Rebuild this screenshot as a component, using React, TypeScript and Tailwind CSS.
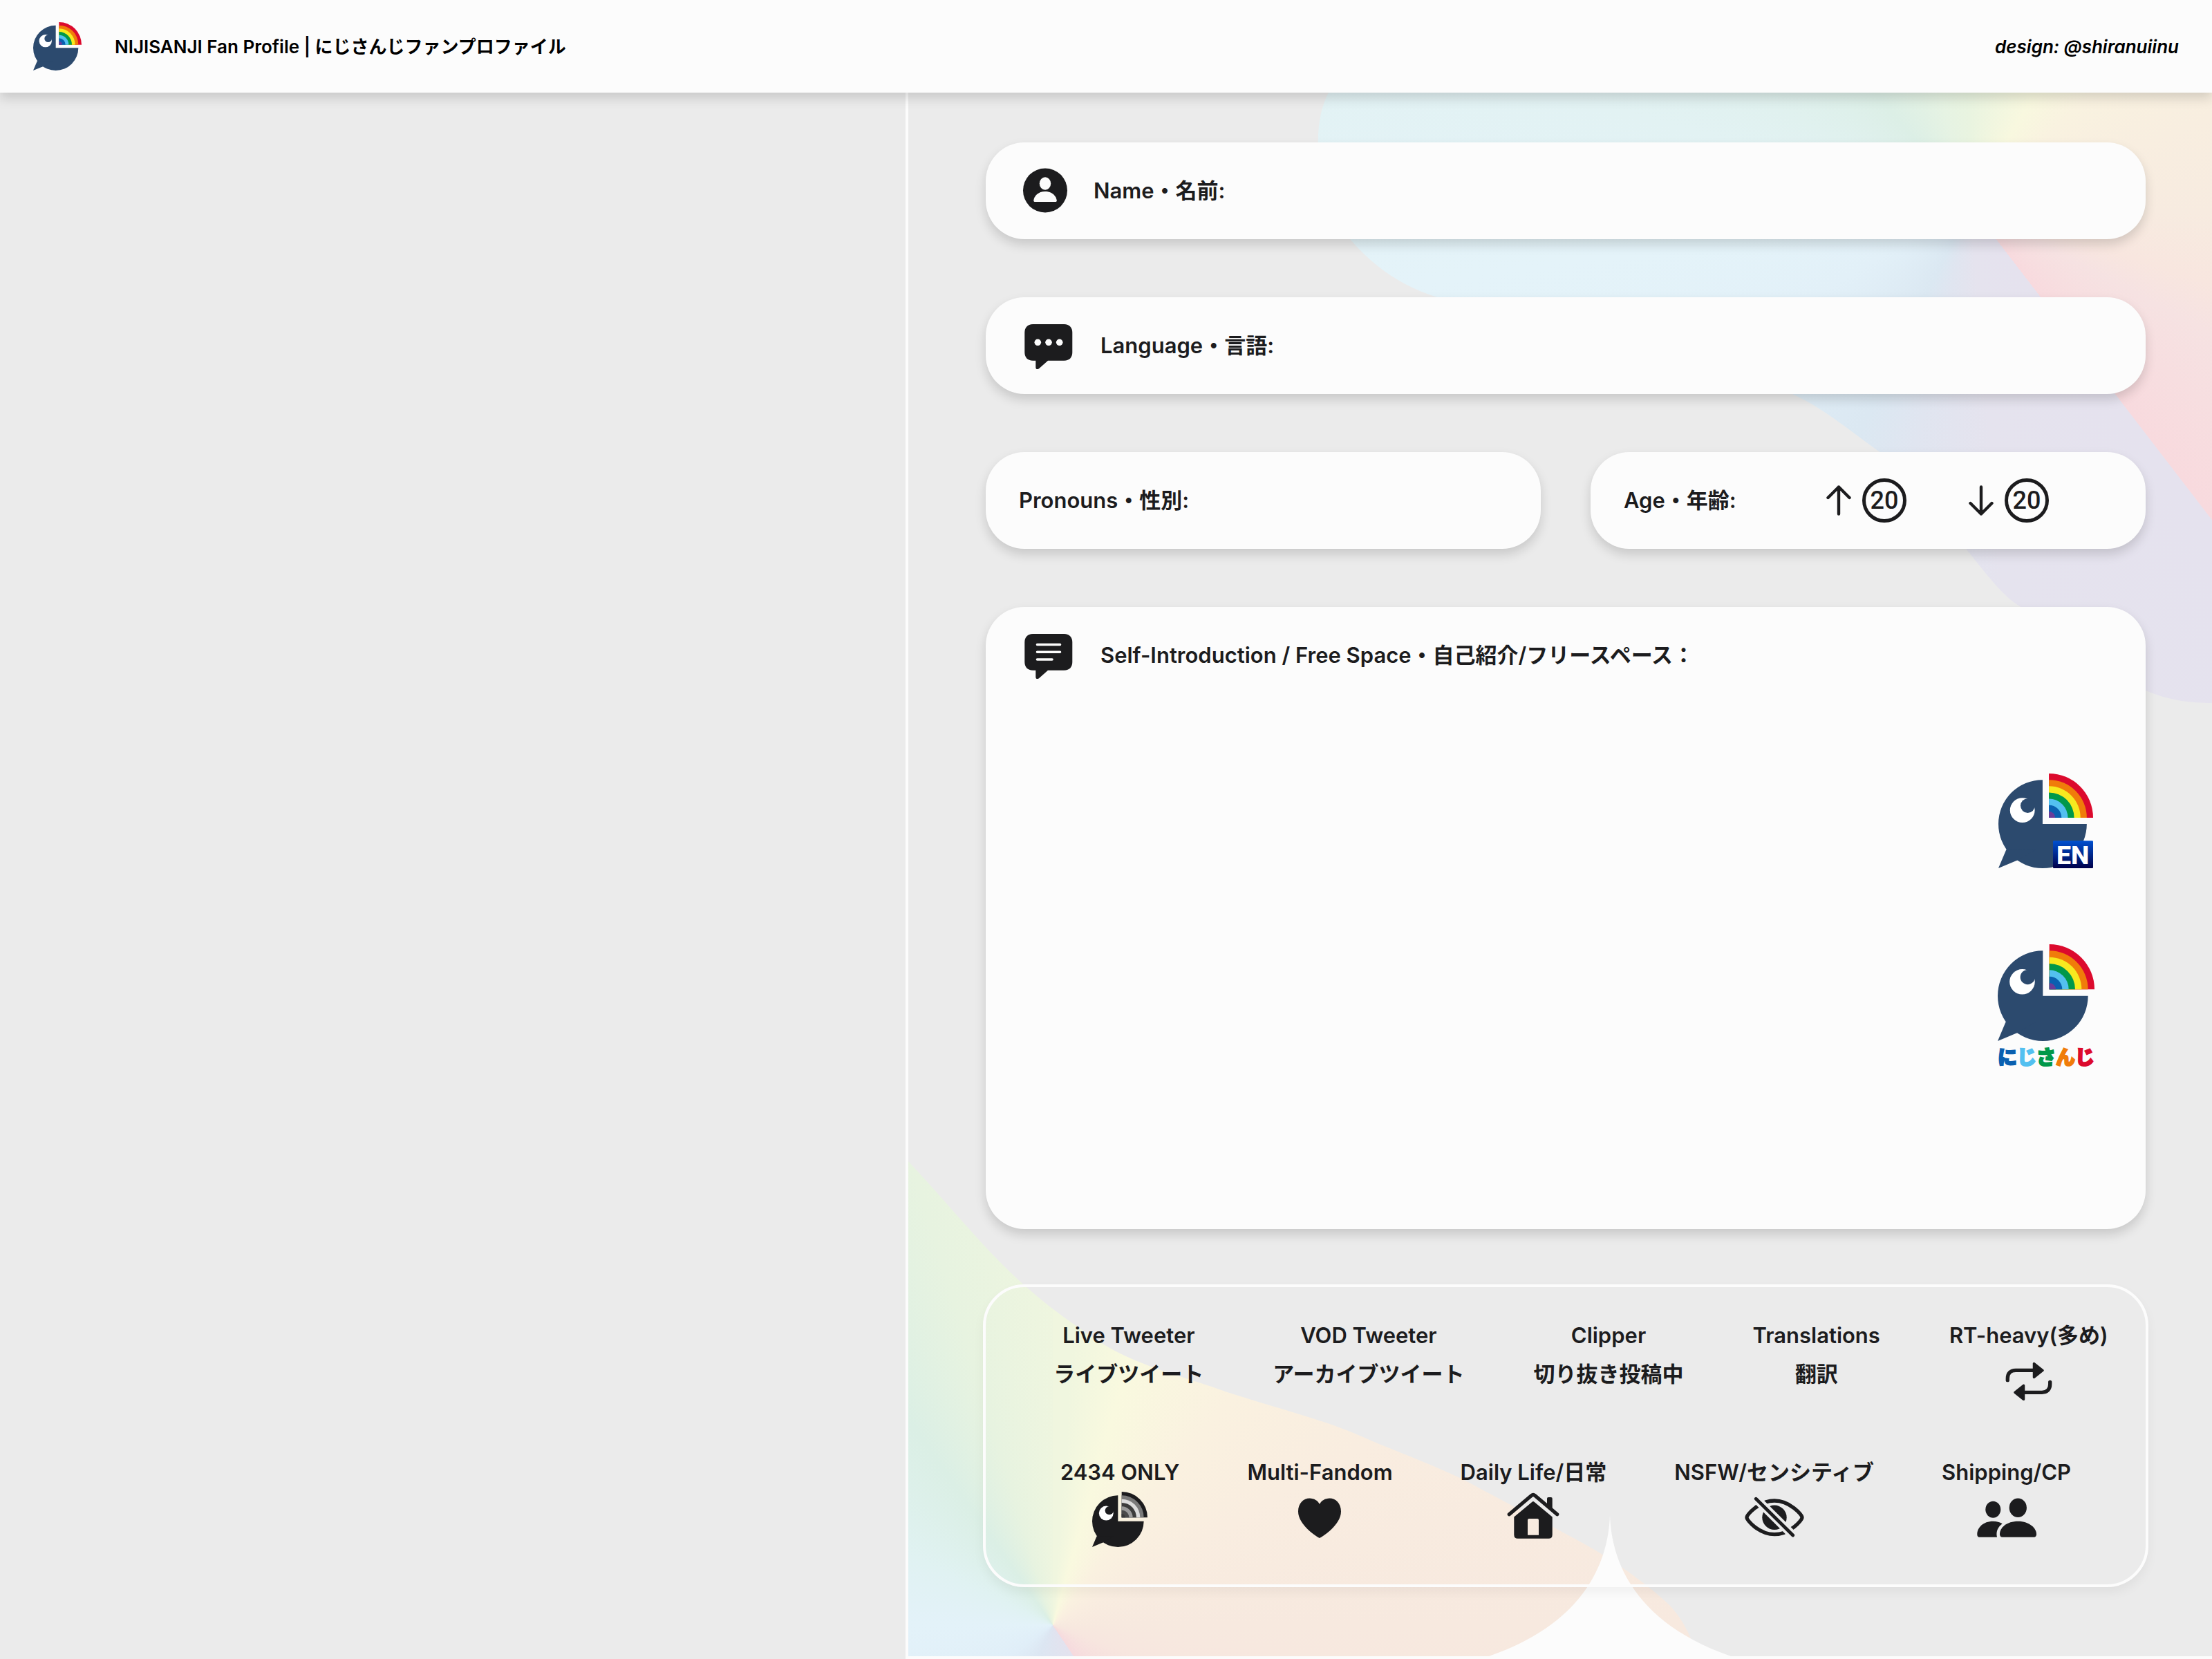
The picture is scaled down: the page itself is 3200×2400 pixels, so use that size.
import React from 'react';

// --- 1. Types & Data ---
interface OptionItem {
  title: string;
  subtitle?: string;
  icon?: React.ReactNode;
}

const FULL_COLORS = ['#dc0a2d', '#f07c0a', '#f7ea1f', '#00984a', '#53c0f0', '#0a60b0', '#6a3c9a'];
const MONO_COLORS = ['#1c1c1e', '#7a7a7a', '#dcdcdc', '#3c3c3c', '#9a9a9a', '#4a4a4a', '#3a3a3a'];

// --- 2. Logos ---
interface MascotProps {
  body?: string;
  bands?: string[];
  className?: string;
  badge?: boolean;
}

function Mascot({ body = '#2c4a6e', bands = FULL_COLORS, className, badge }: MascotProps) {
  return (
    <svg viewBox="0 0 150 150" overflow="visible" className={className} aria-hidden="true">
      <path d="M70 10A70 70 0 1 0 140 80H70Z" fill={body} />
      <path d="M12.5 120.4L0 150L30 137.5L60 120Z" fill={body} />
      <circle cx="38" cy="58.2" r="19.6" fill="#fff" />
      <circle cx="46.4" cy="51" r="11.4" fill={body} />
      {bands.map((color, i) => {
        const r = 70 - i * 10;
        return <path key={color} d={`M80 ${70 - r}A${r} ${r} 0 0 1 ${80 + r} 70H80Z`} fill={color} />;
      })}
      {badge && (
        <>
          <defs>
            <linearGradient id="badge-blue" x1="0" y1="0" x2="0" y2="1">
              <stop offset="0" stopColor="#0050d0" />
              <stop offset="1" stopColor="#00004a" />
            </linearGradient>
          </defs>
          <rect x="86.5" y="106.5" width="63.5" height="43.5" rx="1.5" fill="url(#badge-blue)" />
          <text x="118" y="143" textAnchor="middle" fontSize="41" fontWeight="800" fontFamily="Roboto, sans-serif" fill="#fff">EN</text>
        </>
      )}
    </svg>
  );
}

// --- 3. Icons ---
const AccountIcon = () => (
  <svg viewBox="0 0 76 76" className="w-19 h-19 shrink-0" fill="#1c1c1e" aria-hidden="true">
    <circle cx="38" cy="37.5" r="32" />
    <ellipse cx="38" cy="27.5" rx="8.2" ry="9.2" fill="#fcfcfc" />
    <path d="M23.5 54c-1.7 0-2.3-1-2.2-2C22 45.5 28 39 38 39S54 45.5 54.8 52c.1 1-.5 2-2.2 2Z" fill="#fcfcfc" />
  </svg>
);

function BubbleIcon({ children }: { children: React.ReactNode }) {
  return (
    <svg viewBox="0 0 86 76" className="w-[86px] h-19 shrink-0" fill="#1c1c1e" aria-hidden="true">
      <path d="M20.3 7H65.3c8 0 12 5 12 12V47.7c0 7-4 12-12 12H42L29 71.2c-2.5 1.8-4.7.8-4.7-2V59.7H20.3c-8 0-12-5-12-12V19c0-7 4-12 12-12Z" />
      {children}
    </svg>
  );
}

const DotsBubble = () => (
  <BubbleIcon>
    <g fill="#fcfcfc">
      <circle cx="27.3" cy="33.3" r="4.8" />
      <circle cx="43" cy="33.3" r="4.8" />
      <circle cx="58.7" cy="33.3" r="4.8" />
    </g>
  </BubbleIcon>
);

const LinesBubble = () => (
  <BubbleIcon>
    <path d="M26.5 22.5H59.5M26.5 33.3H59.5M26.5 44H48" fill="none" stroke="#fcfcfc" strokeWidth="3.6" strokeLinecap="round" />
  </BubbleIcon>
);

const ArrowIcon = ({ down = false }: { down?: boolean }) => (
  <svg viewBox="0 0 36 44" className={`w-9 h-11 ${down ? 'rotate-180' : ''}`} fill="none" stroke="#1c1c1e" strokeWidth="4.4" strokeLinecap="round" strokeLinejoin="round" aria-hidden="true">
    <path d="M18 41.5V2.5M2.5 18L18 2.5L33.5 18" />
  </svg>
);

const RepostIcon = () => (
  <svg viewBox="0 0 80 56" className="w-20 h-14 mt-2.5 mb-0.5" aria-hidden="true">
    <path d="M9.3 26.7V24C9.3 16.5 13.5 12.3 21 12.3H48M70.7 29.3V32.6C70.7 40 66.5 44.3 59 44.3H33" fill="none" stroke="#1c1c1e" strokeWidth="5.3" strokeLinecap="round" />
    <path d="M47.5 2.5V22.5L60 12.5ZM32.5 34.3V54.3L20 44.3Z" fill="#1c1c1e" stroke="#1c1c1e" strokeWidth="3.5" strokeLinejoin="round" />
  </svg>
);

const HeartIcon = () => (
  <svg viewBox="0 0 80 80" className="w-20 h-20" fill="#1c1c1e" aria-hidden="true">
    <path d="M40 67C36 65.5 9 48 9 28.5C9 16.5 17 9.5 25.5 9.5C32 9.5 37.5 13 40 18C42.5 13 48 9.5 54.5 9.5C63 9.5 71 16.5 71 28.5C71 48 44 65.5 40 67Z" />
  </svg>
);

const HouseIcon = () => (
  <svg viewBox="0 0 80 80" className="w-20 h-20" fill="#1c1c1e" aria-hidden="true">
    <path d="M5.3 32.8L37.5 5.5Q40 3.5 42.5 5.5L74.7 32.8" fill="none" stroke="#1c1c1e" strokeWidth="5.2" strokeLinecap="round" />
    <path d="M60 22V10q0-2 2-2h3.7q2 0 2 2V28Z" />
    <path fillRule="evenodd" d="M38.5 14.7Q40 13.5 41.5 14.7L67.7 36.5V62.2q0 5.5-5.5 5.5H17.8q-5.5 0-5.5-5.5V36.5ZM34 39q-2 0-2 2V62.7H48V41q0-2-2-2Z" />
  </svg>
);

const HiddenIcon = () => (
  <svg viewBox="0 0 96 80" className="w-24 h-20" aria-hidden="true">
    <mask id="slash-gap">
      <rect width="96" height="80" fill="#fff" />
      <path d="M16 4.7L80 68.3" stroke="#000" strokeWidth="12.5" />
    </mask>
    <g mask="url(#slash-gap)">
      <path d="M8 37.3C8 33 26 13 48 13S88 33 88 37.3S70 61.7 48 61.7S8 41.6 8 37.3Z" fill="none" stroke="#1c1c1e" strokeWidth="5.3" />
      <circle cx="48" cy="37.3" r="17.7" fill="#1c1c1e" />
    </g>
    <path d="M21.3 10.2L74.7 63" stroke="#1c1c1e" strokeWidth="4.8" strokeLinecap="round" />
  </svg>
);

const PeopleIcon = () => (
  <svg viewBox="0 0 96 80" className="w-24 h-20" fill="#1c1c1e" aria-hidden="true">
    <ellipse cx="28.3" cy="25.7" rx="11" ry="12" />
    <ellipse cx="64.3" cy="23.3" rx="12.6" ry="13.7" />
    <path d="M9 65.7c-3 0-3.7-2-3.7-4.3C5.3 52 14 42.7 28.3 42.7C33.5 42.7 38 44 41.7 46.3C36 50.5 32 57 34 65.7Z" />
    <path d="M42 65.7c-3 0-4-2-4-4.5C38 52 48 42.7 64.5 42.7S91 53 91 61.2c0 2.5-1 4.5-4 4.5Z" />
  </svg>
);

const CONTENT_OPTIONS: OptionItem[] = [
  { title: 'Live Tweeter', subtitle: 'ライブツイート' },
  { title: 'VOD Tweeter', subtitle: 'アーカイブツイート' },
  { title: 'Clipper', subtitle: '切り抜き投稿中' },
  { title: 'Translations', subtitle: '翻訳' },
  { title: 'RT-heavy(多め)', icon: <RepostIcon /> },
];

const TOPIC_OPTIONS: OptionItem[] = [
  { title: '2434 ONLY', icon: <Mascot body="#1c1c1e" bands={MONO_COLORS} className="w-20 h-20" /> },
  { title: 'Multi-Fandom', icon: <HeartIcon /> },
  { title: 'Daily Life/日常', icon: <HouseIcon /> },
  { title: 'NSFW/センシティブ', icon: <HiddenIcon /> },
  { title: 'Shipping/CP', icon: <PeopleIcon /> },
];

// --- 4. Layout pieces ---
interface FieldProps {
  id: string;
  label: string;
  icon?: React.ReactNode;
}

function Field({ id, label, icon }: FieldProps) {
  return (
    <div className="h-35 px-12 flex items-center gap-8 bg-[#fcfcfc] rounded-[56px] shadow-[0_8px_16px_rgba(0,0,0,0.15)]">
      {icon}
      <label htmlFor={id} className="whitespace-nowrap">{label}</label>
      <input id={id} type="text" className="flex-1 min-w-0 bg-transparent outline-none" />
    </div>
  );
}

function Option({ title, subtitle, icon }: OptionItem) {
  return (
    <li className="flex flex-col items-center leading-14 whitespace-nowrap">
      <span>{title}</span>
      {subtitle && <span>{subtitle}</span>}
      {icon}
    </li>
  );
}

function AgeMark({ down }: { down?: boolean }) {
  return (
    <span className="flex items-center gap-4">
      <ArrowIcon down={down} />
      <span className="w-16 h-16 flex items-center justify-center rounded-full border-5 border-[#1c1c1e] text-[36px] font-medium font-['Roboto',sans-serif]">20</span>
    </span>
  );
}

function Backdrop() {
  return (
    <div className="absolute inset-0 overflow-hidden" aria-hidden="true">
      <div className="absolute top-0 right-0 w-[1300px] h-[890px] bg-[conic-gradient(at_950px_163px,#e9f4e0_0deg,#f8f8df_30deg,#f9f2e0_48deg,#f8eee0_70deg,#f7ebe0_92deg,#f8e6df_108deg,#f6e2e2_118deg,#f8dade_142.4deg,#e5e2ee_142.5deg,#e5e3ee_175deg,#e0e5f0_193deg,#dbe8f2_206deg,#e2f0f8_240deg,#e4f3f9_262deg,#e2f2f3_285deg,#dcefe6_320deg,#e6f3e3_345deg,#e9f4e0_360deg)] [clip-path:path('M22_0C0_40_-5_130_54_213C90_255_130_280_176_295C340_350_560_370_697_438C740_458_780_492_818_519C870_565_910_620_945_661C980_705_1000_730_1022_743C1100_830_1150_850_1204_865C1240_880_1270_883_1300_883V0Z')]" />
      <div className="absolute bottom-0 left-0 w-[1150px] h-[716px] bg-[conic-gradient(at_209px_671px,#f0f6df_4deg,#f9f9df_16deg,#faf1e0_38deg,#f9ede0_60deg,#f7e9df_90deg,#f7e6df_110deg,#f6dade_146deg,#e3e2ee_146.5deg,#dce6f2_205deg,#e0eef8_235deg,#e3f2f9_270deg,#e0f2f2_296deg,#dbefe5_325deg,#e7f3e0_343deg,#f0f6df_364deg)] [clip-path:path('M0_0C52_55_100_115_147_160S230_230_278_262S400_312_450_330S600_373_651_396S770_442_821_470S960_542_1001_567S1080_622_1099_640S1136_692_1140_716H0Z')]" />
      <svg viewBox="0 0 350 204" className="absolute bottom-0 left-[53.8%] -translate-x-1/2 w-[350px] h-[204px]" fill="#fcfcfc">
        <path d="M175 0C173 58 147 153 0 204H350C203 153 177 58 175 0Z" />
      </svg>
    </div>
  );
}

// --- 5. Main App Component ---
export default function App() {
  return (
    <div className="min-h-screen flex flex-col bg-[#ebebeb] text-[#1c1c1e] text-[31px] font-semibold font-['Inter','Noto_Sans_CJK_JP',sans-serif]" lang="ja">
      <header className="relative z-10 px-12 py-8 flex items-center gap-12 bg-[#fcfcfc] text-black text-[26px] shadow-[0_8px_16px_rgba(0,0,0,0.15)]">
        <Mascot className="w-[70px] h-[70px]" />
        <h1 className="flex-1">NIJISANJI Fan Profile | にじさんじファンプロファイル</h1>
        <p className="italic">design: @shiranuiinu</p>
      </header>

      <main className="flex-1 grid grid-cols-[1310fr_1890fr]">
        <section aria-label="Portrait" />

        <section className="relative flex flex-col border-l-4 border-b-4 border-[#fcfcfc] pt-18 pb-25 pl-28 pr-24">
          <Backdrop />

          <form className="relative flex-1 flex flex-col gap-21">
            <Field id="name" label="Name・名前:" icon={<AccountIcon />} />
            <Field id="language" label="Language・言語:" icon={<DotsBubble />} />

            <div className="grid grid-cols-2 gap-18">
              <Field id="pronouns" label="Pronouns・性別:" />
              <div className="h-35 px-12 flex items-center bg-[#fcfcfc] rounded-[56px] shadow-[0_8px_16px_rgba(0,0,0,0.15)]">
                <span className="flex-1 whitespace-nowrap">Age・年齢:</span>
                <span className="flex gap-[90px] mr-[92px]">
                  <AgeMark />
                  <AgeMark down />
                </span>
              </div>
            </div>

            <div className="flex-1 flex flex-col px-12 pt-8 bg-[#fcfcfc] rounded-[56px] shadow-[0_8px_16px_rgba(0,0,0,0.15)]">
              <div className="flex items-center gap-8">
                <LinesBubble />
                <label htmlFor="intro">Self-Introduction / Free Space・自己紹介/フリースペース：</label>
              </div>
              <div className="flex-1 flex">
                <textarea id="intro" className="flex-1 resize-none bg-transparent outline-none" />
                <div className="flex flex-col items-center mt-[133px] mr-[26px]">
                  <Mascot badge className="w-[137px] h-[137px]" />
                  <Mascot className="w-35 h-35 mt-[110px]" />
                  <span className="flex mt-2 text-[28px] leading-8 font-black [-webkit-text-stroke-width:2px]">
                    <span className="text-[#0a60b0]">に</span>
                    <span className="text-[#53c0f0]">じ</span>
                    <span className="text-[#00984a]">さ</span>
                    <span className="text-[#f07c0a]">ん</span>
                    <span className="text-[#dc0a2d]">じ</span>
                  </span>
                </div>
              </div>
            </div>
          </form>

          <div className="relative mt-20 -mx-1 pt-[42px] pb-[54px] flex flex-col gap-[74px] rounded-[60px] border-4 border-[#fcfcfc] shadow-[0_8px_16px_rgba(0,0,0,0.05)]">
            <ul className="flex justify-center gap-[100px] pl-11">
              {CONTENT_OPTIONS.map(item => <Option key={item.title} {...item} />)}
            </ul>
            <ul className="flex justify-center gap-[98px]">
              {TOPIC_OPTIONS.map(item => <Option key={item.title} {...item} />)}
            </ul>
          </div>
        </section>
      </main>
    </div>
  );
}
